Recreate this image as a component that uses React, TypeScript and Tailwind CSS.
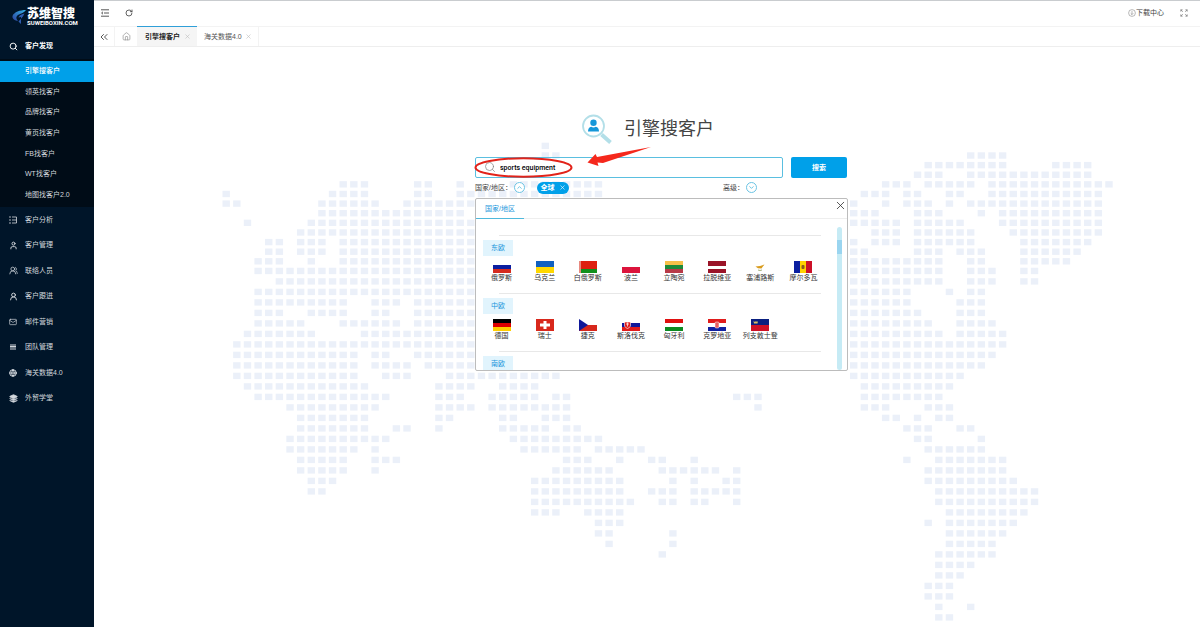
import { ReactNode } from 'react';
import {
  ChevronDown,
  ChevronUp,
  ChevronsLeft,
  Globe,
  House,
  Layers,
  Mail,
  RotateCw,
  Search,
  User,
  UserRound,
  UsersRound,
  X,
} from 'lucide-react';

interface Country {
  name: string;
  flag: ReactNode;
}

// Three equal bands, top to bottom
const bands = (a: string, b: string, c: string) => (
  <>
    <rect width="18" height="4" fill={a} />
    <rect y="4" width="18" height="4" fill={b} />
    <rect y="8" width="18" height="4" fill={c} />
  </>
);

const regions: { name: string; countries: Country[] }[] = [
  {
    name: '东欧',
    countries: [
      { name: '俄罗斯', flag: bands('#ffffff', '#0b1fa0', '#d52b1e') },
      {
        name: '乌克兰',
        flag: (
          <>
            <rect width="18" height="6" fill="#1060c0" />
            <rect y="6" width="18" height="6" fill="#ffd800" />
          </>
        ),
      },
      {
        name: '白俄罗斯',
        flag: (
          <>
            <rect width="18" height="8" fill="#de2010" />
            <rect y="8" width="18" height="4" fill="#10901c" />
            <rect width="2" height="12" fill="#e88a80" />
          </>
        ),
      },
      {
        name: '波兰',
        flag: (
          <>
            <rect width="18" height="6" fill="#ffffff" />
            <rect y="6" width="18" height="6" fill="#dc143c" />
          </>
        ),
      },
      { name: '立陶宛', flag: bands('#f6c04a', '#1c8a3a', '#b83a48') },
      {
        name: '拉脱维亚',
        flag: (
          <>
            <rect width="18" height="12" fill="#9a1428" />
            <rect y="5" width="18" height="3" fill="#ffffff" />
          </>
        ),
      },
      {
        name: '塞浦路斯',
        flag: (
          <>
            <rect width="18" height="12" fill="#ffffff" />
            <path d="M4.500 5.500L9 5L13.500 3.500L11.500 6L10.500 7.500L7 7.200Z" fill="#d99b1c" />
            <path d="M7 9Q9 10 11 9" stroke="#8b9c5a" fill="none" strokeWidth="0.8" />
          </>
        ),
      },
      {
        name: '摩尔多瓦',
        flag: (
          <>
            <rect width="6" height="12" fill="#0b1fa0" />
            <rect x="6" width="6" height="12" fill="#ffd200" />
            <rect x="12" width="6" height="12" fill="#cc1028" />
            <rect x="7.5" y="4" width="3" height="4" rx="1" fill="#8a5a20" />
          </>
        ),
      },
    ],
  },
  {
    name: '中欧',
    countries: [
      { name: '德国', flag: bands('#000000', '#dd0000', '#ffce00') },
      {
        name: '瑞士',
        flag: (
          <>
            <rect width="18" height="12" fill="#d8281c" />
            <path d="M7.500 2h3v2.500h3.500v3h-3.500V10h-3V7.500H4v-3h3.500z" fill="#ffffff" />
          </>
        ),
      },
      {
        name: '捷克',
        flag: (
          <>
            <rect width="18" height="6" fill="#ffffff" />
            <rect y="6" width="18" height="6" fill="#d7281c" />
            <path d="M0 0L9 6L0 12Z" fill="#10189a" />
          </>
        ),
      },
      {
        name: '斯洛伐克',
        flag: (
          <>
            {bands('#ffffff', '#10189a', '#e01c1c')}
            <path d="M2.500 3h6v4q-1 2-3 2.500q-2-.5-3-2.500z" fill="#e01c1c" stroke="#ffffff" strokeWidth="0.6" />
            <path d="M5.500 3.500v4M4 5h3" stroke="#ffffff" strokeWidth="0.7" />
          </>
        ),
      },
      { name: '匈牙利', flag: bands('#e01010', '#ffffff', '#0b8a20') },
      {
        name: '克罗地亚',
        flag: (
          <>
            {bands('#e01c1c', '#ffffff', '#1020a0')}
            <rect x="7" y="3" width="4" height="6" rx="1" fill="#e86060" stroke="#ffffff" strokeWidth="0.5" />
          </>
        ),
      },
      {
        name: '列支敦士登',
        flag: (
          <>
            <rect width="18" height="6" fill="#0a2080" />
            <rect y="6" width="18" height="6" fill="#ce1126" />
            <path d="M3 4.500L2.500 2L4 3L5 2L6 3L7 2L6.500 4.500Z" fill="#d8c060" />
          </>
        ),
      },
    ],
  },
  { name: '南欧', countries: [] },
];

// World map dots: [row, [first column, last column], ...]
const mapRows: [number, ...[number, number][]][] = [
  [-1, [30, 30]],
  [0, [30, 31], [70, 73]],
  [1, [66, 73], [78, 81]],
  [2, [65, 67], [70, 81]],
  [3, [11, 13], [18, 19], [22, 22], [27, 35], [62, 64], [66, 70], [72, 83]],
  [4, [0, 0], [10, 13], [18, 19], [22, 35], [60, 62], [64, 65], [68, 69], [72, 82]],
  [5, [0, 1], [9, 14], [17, 24], [59, 59], [62, 62], [64, 66], [68, 68], [70, 82]],
  [6, [9, 22], [59, 61], [65, 67], [71, 71], [73, 82]],
  [7, [2, 2], [8, 23], [59, 63], [65, 69], [73, 82]],
  [8, [7, 23], [61, 63], [65, 70], [74, 82]],
  [9, [4, 5], [7, 9], [11, 23], [59, 59], [61, 63], [65, 70], [75, 81]],
  [10, [4, 5], [7, 9], [11, 23], [59, 60], [65, 67], [69, 71], [75, 80]],
  [11, [3, 5], [8, 8], [11, 23], [59, 67], [70, 71], [75, 79]],
  [12, [3, 23], [59, 67], [70, 72], [75, 76]],
  [13, [5, 23], [59, 67], [70, 72], [75, 76]],
  [14, [3, 23], [59, 64], [68, 68], [70, 71]],
  [15, [3, 11], [14, 16], [18, 23], [59, 64], [69, 71]],
  [16, [3, 5], [8, 11], [14, 15], [18, 23], [59, 65], [69, 71]],
  [17, [3, 7], [11, 16], [18, 23], [59, 66], [69, 72]],
  [18, [2, 8], [13, 23], [59, 67], [69, 73]],
  [19, [1, 23], [59, 73]],
  [20, [1, 12], [14, 15], [18, 23], [59, 72]],
  [21, [1, 12], [14, 17], [19, 23], [59, 71]],
  [22, [1, 12], [15, 17], [21, 31], [59, 69]],
  [23, [2, 13], [20, 23], [26, 29], [60, 68]],
  [24, [3, 15], [20, 22], [25, 29], [31, 32], [48, 50], [60, 67]],
  [25, [6, 14], [20, 23], [25, 32], [50, 50], [60, 62], [66, 68]],
  [26, [7, 13], [20, 21], [26, 27], [30, 32], [62, 63], [65, 65], [67, 68]],
  [27, [7, 13], [16, 17], [20, 20], [26, 30], [32, 33], [64, 66], [69, 70]],
  [28, [6, 15], [27, 35], [65, 66], [71, 71]],
  [29, [6, 12], [14, 14], [28, 33], [35, 39], [66, 71]],
  [30, [7, 11], [14, 16], [32, 34], [37, 37], [40, 41], [44, 44], [64, 64], [67, 73]],
  [31, [7, 11], [14, 14], [31, 36], [41, 46], [48, 48], [66, 73]],
  [32, [8, 10], [29, 37], [42, 42], [44, 44], [47, 48], [66, 74]],
  [33, [8, 9], [29, 37], [40, 42], [44, 48], [67, 76]],
  [34, [29, 38], [41, 42], [44, 45], [48, 48], [67, 76]],
  [35, [29, 31], [34, 37], [68, 75]],
  [36, [35, 37], [66, 66], [68, 74]],
  [37, [35, 36], [42, 42], [68, 73]],
  [38, [36, 36], [42, 42], [68, 72]],
  [39, [41, 41], [67, 72]],
  [40, [67, 70]],
  [41, [67, 69]],
  [42, [66, 68]],
  [43, [66, 68]],
  [44, [67, 67], [70, 70]],
  [45, [67, 68]],
];

const WorldMap = () => (
  <svg
    viewBox="0 0 1106 579"
    preserveAspectRatio="xMidYMin meet"
    className="absolute inset-0 w-full"
    fill="#ebf0f9"
    aria-hidden="true"
  >
    {mapRows.map(([row, ...runs]) => {
      const y = row <= 12 ? 105.3 + row * 9.62 : 220.7 + (row - 12) * 10.5;
      return runs.map(([from, to]) =>
        Array.from({ length: to - from + 1 }, (_, i) => (
          <rect key={`${row}-${from + i}`} x={128.5 + (from + i) * 10.636} y={y} width="7.4" height="6.4" />
        ))
      );
    })}
  </svg>
);

const Logo = () => (
  <div className="flex h-[33px] items-center pt-px pl-3">
    <svg width="14" height="16" viewBox="0 0 14 16" aria-hidden="true">
      <defs>
        <linearGradient id="wing" x1="0" y1="1" x2="1" y2="0">
          <stop offset="0" stopColor="#2b3f9e" />
          <stop offset="1" stopColor="#35b5e8" />
        </linearGradient>
      </defs>
      <path d="M14 1C8 1 2 3 .5 7C0 10 3 11.500 6 12C3.500 9 4 7 7 5.500C9 4.500 12 4 14 1Z" fill="url(#wing)" />
      <path d="M12.500 4.500C9 5.500 6.500 7 6.500 8.500L9 8L9 15L6.500 12.500C8.500 10 11 8 12.500 4.500Z" fill="#2d5cb0" />
    </svg>
    <div className="ml-px text-white">
      <div className="text-[12px] leading-[12px] font-black">苏维智搜</div>
      <div className="font-[Roboto] text-[6px] leading-[6px] font-bold">SUWEIBOXIN.COM</div>
    </div>
  </div>
);

const finders = ['引擎搜客户', '领英找客户', '品牌找客户', '黄页找客户', 'FB找客户', 'WT找客户', '地图找客户2.0'];

const AnalysisIcon = () => (
  <svg width="8" height="8" viewBox="0 0 8 8" fill="none" stroke="currentColor" strokeWidth="0.8">
    <path d="M0 1h2M0 4h2M0 7h2M3 1h4.500v6H3M3 4h4.500" />
  </svg>
);

const TeamIcon = () => (
  <svg width="8" height="8" viewBox="0 0 8 8" fill="currentColor">
    <path d="M1 1.500h6v1H1zM1 3h6v1H1zM1 4.500h6v1H1zM1 6h6v.6H1z" />
  </svg>
);

const menus = [
  { label: '客户分析', icon: <AnalysisIcon /> },
  { label: '客户管理', icon: <User size={9} strokeWidth={2.5} /> },
  { label: '联络人员', icon: <UsersRound size={9} /> },
  { label: '客户跟进', icon: <UserRound size={9} strokeWidth={2.5} /> },
  { label: '邮件营销', icon: <Mail size={8} /> },
  { label: '团队管理', icon: <TeamIcon /> },
  { label: '海关数据4.0', icon: <Globe size={8} strokeWidth={3} /> },
  { label: '外贸学堂', icon: <Layers size={9} fill="currentColor" /> },
];

const Sidebar = () => (
  <aside className="w-[94px] shrink-0 bg-[#001529] text-[#d3d8dd]">
    <Logo />
    <a href="#discover" className="flex h-[26px] items-center pl-[9px] font-bold text-white">
      <span className="w-4">
        <Search size={9} strokeWidth={2.5} />
      </span>
      客户发现
    </a>
    <nav className="bg-[#000c17] py-0.5">
      <ul className="grid h-[144px] auto-rows-fr">
        {finders.map((label, i) => (
          <li key={label} className="flex">
            <a
              href="#finder"
              className={
                i === 0
                  ? 'flex w-full items-center bg-[#00a0e9] pl-[25px] font-medium text-white'
                  : 'flex w-full items-center pl-[25px]'
              }
            >
              {label}
            </a>
          </li>
        ))}
      </ul>
    </nav>
    <ul className="grid h-[204px] auto-rows-fr">
      {menus.map(({ label, icon }) => (
        <li key={label} className="flex">
          <a href="#menu" className="flex w-full items-center pl-[9px]">
            <span className="w-4">{icon}</span>
            {label}
          </a>
        </li>
      ))}
    </ul>
  </aside>
);

const TopBar = () => (
  <header className="flex h-[26px] items-center justify-between border-t border-[#c9cccf] pr-3 pb-px pl-[7px] text-[#444]">
    <div className="flex items-center gap-4">
      <button aria-label="收起菜单">
        <svg width="8" height="8" viewBox="0 0 8 8" fill="none" stroke="currentColor" strokeWidth="0.9">
          <path d="M0 .8h8M3 4h5M0 7.200h8M2 2.800L.6 4L2 5.200" />
        </svg>
      </button>
      <button aria-label="刷新">
        <RotateCw size={8} strokeWidth={2.5} />
      </button>
    </div>
    <div className="flex items-center gap-4">
      <a href="#download" className="flex items-center">
        <svg width="8" height="8" viewBox="0 0 8 8" fill="none" stroke="#888" strokeWidth="0.6">
          <circle cx="4" cy="4" r="3.400" />
          <path d="M4 2v3.600M2.700 4.300L4 5.600L5.300 4.300" />
        </svg>
        下载中心
      </a>
      <button aria-label="全屏">
        <svg width="8" height="8" viewBox="0 0 8 8" fill="none" stroke="#777" strokeWidth="0.7">
          <path d="M.8 2.600V.8h1.800M.8.8l2 2M5.400.8h1.800v1.800M7.200.8l-2 2M.8 5.400v1.800h1.800M.8 7.200l2-2M7.200 5.400v1.800H5.400M7.200 7.200l-2-2" />
        </svg>
      </button>
    </div>
  </header>
);

const TabBar = () => (
  <nav className="flex h-[21px] border-y border-b-[#eeeeee] border-t-[#f3f3f3] text-[#555]">
    <button aria-label="向左" className="flex w-[21px] items-center justify-center border-r border-[#f3f3f3]">
      <ChevronsLeft size={12} />
    </button>
    <button aria-label="主页" className="flex w-[22px] items-center justify-center text-[#999]">
      <House size={9} strokeWidth={2} />
    </button>
    <a
      href="#engine"
      className="-mt-px flex w-[60px] items-center justify-between border-t border-[#2f9fd8] bg-[#f5f5f5] pr-1.5 pl-2 font-bold text-[#222]"
    >
      引擎搜客户
      <X size={7} color="#bbb" />
    </a>
    <a href="#customs" className="flex w-[62px] items-center justify-between border-r border-[#f3f3f3] pr-1.5 pl-[7px]">
      海关数据4.0
      <X size={7} color="#bbb" />
    </a>
  </nav>
);

const Title = () => (
  <div className="flex items-center justify-center gap-3 pl-0.5">
    <svg width="30" height="30" viewBox="0 0 30 30" aria-hidden="true">
      <circle cx="11.500" cy="12" r="10.500" fill="#ffffff" stroke="#b3dfe8" strokeWidth="1.800" />
      <path d="M19.500 20.500L28.500 28.500" stroke="#b3dfe8" strokeWidth="4" />
      <circle cx="11.500" cy="8.800" r="3.200" fill="#1597d9" />
      <path d="M6 17.500q0-4 3.200-4.700q2.300 1.600 4.600 0q3.200.7 3.200 4.700z" fill="#1597d9" />
    </svg>
    <h1 className="text-[18px] leading-[30px] text-[#444]">引擎搜客户</h1>
  </div>
);

// Hand-drawn red mark over the keyword box
const Annotation = () => (
  <svg
    width="180"
    height="36"
    viewBox="0 0 180 36"
    className="pointer-events-none absolute -top-3 -left-px"
    aria-hidden="true"
  >
    <ellipse cx="49.500" cy="22.500" rx="48" ry="9.300" fill="none" stroke="#e2231a" strokeWidth="2" />
    <path d="M113.500 17.500L121.500 9L123 12L177 2L129 18L123.500 17.500L124.500 21Z" fill="#f5281c" />
  </svg>
);

const CountryPanel = () => (
  <section className="relative -mr-px mt-1 h-[173px] overflow-hidden rounded-[2px] border border-[#bcbcbc] bg-white text-[#333]">
    <div className="flex h-5 border-b border-[#eeeeee]">
      <button type="button" className="h-5 w-12 border-b border-[#4fb9dc] text-[#1c97dc]">
        国家/地区
      </button>
    </div>
    <button type="button" aria-label="关闭" className="absolute top-0 right-0">
      <X size={13} strokeWidth={1.5} />
    </button>
    <div className="mt-2 mr-[5px] flex gap-4">
      <div className="min-w-0 flex-1 pt-2 pl-[7px]">
        {regions.map(({ name, countries }) => (
          <div key={name} className="h-[58px]">
            <div className="ml-4 border-t border-[#e8e8e8]" />
            <h2 className="mt-1 flex h-4 w-[30px] items-center justify-center bg-[#e1f4fd] text-[#2095dc]">{name}</h2>
            <ul className="-mr-1 -ml-[3px] mt-[5px] grid grid-cols-8">
              {countries.map((country) => (
                <li key={country.name} className="flex flex-col items-center whitespace-nowrap">
                  <svg width="18" height="12" viewBox="0 0 18 12" aria-hidden="true">
                    {country.flag}
                  </svg>
                  <span className="leading-[10px]">{country.name}</span>
                </li>
              ))}
            </ul>
          </div>
        ))}
      </div>
      <div className="h-[143px] w-[5px] rounded-full bg-[#c6ebf5] pt-[13px]">
        <div className="h-[14px] bg-[#9ad5f0]" />
      </div>
    </div>
  </section>
);

const SearchForm = () => (
  <form className="relative mx-auto mt-[13px] w-[372px]" onSubmit={(e) => e.preventDefault()}>
    <div className="flex gap-2">
      <div className="relative flex-1">
        <Search size={12} strokeWidth={1.5} className="absolute top-1 left-[9px] text-[#888]" />
        <input
          aria-label="关键词"
          defaultValue="sports equipment"
          className="h-[21px] w-full rounded-[2px] border border-[#5abfe0] bg-transparent pl-6 font-[Roboto] text-[7px] font-medium text-black outline-none"
        />
      </div>
      <button className="h-[21px] w-14 rounded-[2px] bg-[#00a0e9] font-bold text-white">搜索</button>
    </div>
    <Annotation />
    <div className="mt-[3px] flex h-[13px] items-center text-[#444]">
      <span className="w-[39px]">国家/地区：</span>
      <button
        type="button"
        aria-label="收起国家"
        className="flex size-[11px] items-center justify-center rounded-full border border-[#6cc4e4] bg-white text-[#5abfe0]"
      >
        <ChevronUp size={7} strokeWidth={3} className="shrink-0" />
      </button>
      <button
        type="button"
        className="ml-3 flex h-3 w-8 items-center justify-center gap-1 rounded-full bg-[#00a0e9] font-bold text-white"
      >
        全球
        <X size={7} />
      </button>
      <span className="ml-auto">高级：</span>
      <button
        type="button"
        aria-label="展开高级"
        className="mr-[90px] ml-0.5 flex size-[11px] items-center justify-center rounded-full border border-[#6cc4e4] bg-white text-[#5abfe0]"
      >
        <ChevronDown size={7} strokeWidth={3} className="shrink-0" />
      </button>
    </div>
    <CountryPanel />
  </form>
);

export default function App() {
  return (
    <div className="flex min-h-screen bg-white font-['Liberation_Sans','Noto_Sans_CJK_SC',sans-serif] text-[7px] leading-[10px]">
      <Sidebar />
      <div className="flex min-w-0 flex-1 flex-col">
        <TopBar />
        <TabBar />
        <main className="relative flex-1 overflow-hidden">
          <WorldMap />
          <div className="relative pt-[67px]">
            <Title />
            <div className="pl-7">
              <SearchForm />
            </div>
          </div>
        </main>
      </div>
    </div>
  );
}
